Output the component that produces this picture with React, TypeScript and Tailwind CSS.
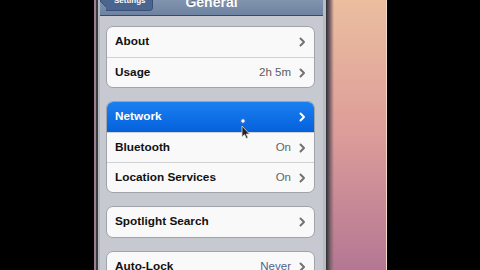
const font = { fontFamily: '"Liberation Sans", Arial, sans-serif' };

type Row = { label: string; value?: string; valueColor?: string; selected?: boolean };

const groups: Row[][] = [
  [{ label: "About" }, { label: "Usage", value: "2h 5m", valueColor: "text-[#5c5c5c]" }],
  [
    { label: "Network", selected: true },
    { label: "Bluetooth", value: "On", valueColor: "text-[#666666]" },
    { label: "Location Services", value: "On", valueColor: "text-[#666666]" },
  ],
  [{ label: "Spotlight Search" }],
  [{ label: "Auto-Lock", value: "Never", valueColor: "text-[#4f628a]" }],
];

function Chevron({ white }: { white?: boolean }) {
  return (
    <svg width="7" height="10" viewBox="0 0 7 10" className="shrink-0">
      <path
        d="M1.5 1.5 L5 5 L1.5 8.5"
        fill="none"
        stroke={white ? "#ffffff" : "#727272"}
        strokeWidth="2"
        strokeLinecap="round"
        strokeLinejoin="round"
      />
    </svg>
  );
}

function Group({ rows }: { rows: Row[] }) {
  return (
    <div className="shrink-0 rounded-[7px] border border-[#9fa4aa] bg-[#f9f9f9] overflow-hidden">
      {rows.map((r, i) => (
        <div
          key={r.label}
          className={`h-[30px] flex items-center pl-[8px] pr-[8px] ${i > 0 ? "border-t border-[#cfd1d4]" : ""} ${
            r.selected ? "bg-gradient-to-b from-[#1a7ff0] to-[#0561db] text-white" : "text-[#111111]"
          }`}
        >
          <span className="flex-1 font-bold text-[11.8px] leading-none">{r.label}</span>
          {r.value && <span className={`text-[11.5px] leading-none mr-[8px] ${r.valueColor}`}>{r.value}</span>}
          <Chevron white={r.selected} />
        </div>
      ))}
    </div>
  );
}

export default function App() {
  return (
    <div className="relative w-[480px] h-[270px] bg-black flex overflow-hidden" style={font}>
      <div className="w-[94px] bg-black" />
      <div className="w-[2px] bg-[#9c7f90]" />
      <div className="w-[2px] bg-[#3b3b42]" />
      <div className="w-[2px] bg-[#b6bac0]" />

      <div className="w-[223px] flex flex-col bg-[#c6cad0] overflow-hidden">
        <div className="shrink-0 h-[30px] -mt-[14px] grid grid-cols-[1fr_auto_1fr] items-center bg-gradient-to-b from-[#93a4bb] to-[#6e83a1] border-b border-[#3e4a5a]">
          <div className="flex items-center pl-[2px]">
            <div className="w-[14px] h-[14px] rotate-45 -mr-[10px] bg-[#4a6590] rounded-[2px] border-l border-b border-[#3a4f73]" />
            <div className="relative h-[20px] pl-[8px] pr-[6px] flex items-center bg-[#4a6590] rounded-r-[4px] border-t border-r border-b border-[#3a4f73]">
              <span className="text-white font-bold text-[8px] leading-none">Settings</span>
            </div>
          </div>
          <span className="mt-[3px] text-white font-bold text-[14px] leading-none px-[4px] [text-shadow:0_-1px_0_#4a5a70]">
            General
          </span>
          <div />
        </div>

        <div className="shrink-0 flex flex-col gap-[13px] pt-[10px] pl-[6px] pr-[8px]">
          {groups.map((g, i) => (
            <Group key={i} rows={g} />
          ))}
        </div>
      </div>

      <div className="w-[3px] bg-[#b9bdc3]" />
      <div className="w-[60px] relative bg-gradient-to-b from-[#ebbe9f] via-[#dc9c99] to-[#b47793]">
        <div className="h-full w-[8px] bg-gradient-to-r from-[#2e2d35] via-[#7a6068] to-transparent" />
      </div>
      <div className="w-[1px] bg-[#f2d6c6]" />
      <div className="flex-1 bg-black" />

      <svg className="absolute left-[238px] top-[116px]" width="14" height="26" viewBox="0 0 14 26">
        <circle cx="5" cy="5" r="2.4" fill="#ffffff" stroke="#2a6fd0" strokeWidth="1.4" />
        <path d="M4 10 L4 21 L6.5 18.6 L8.4 22.4 L10 21.7 L8.2 18 L11.5 18 Z" fill="#222222" stroke="#dddddd" strokeWidth="0.8" />
      </svg>
    </div>
  );
}
